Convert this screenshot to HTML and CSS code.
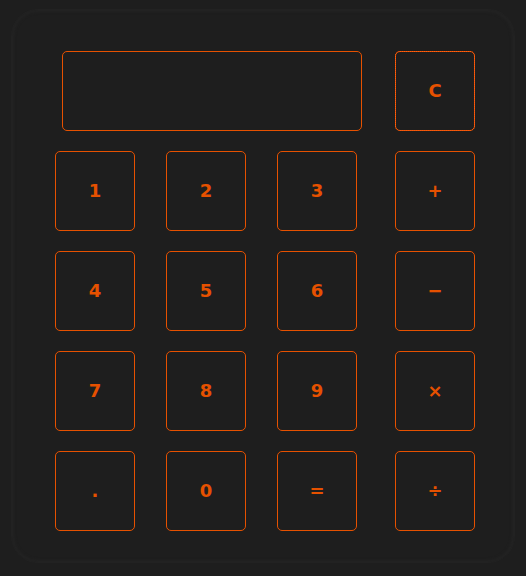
FILE: index.html
```html
<!DOCTYPE html>
<html>
<head>
<meta charset="utf-8">
<link rel="stylesheet" href="styles.css">
</head>
<body>
<div class="calc">
  <div class="top">
    <div class="display"></div>
    <button class="key key-clear">C</button>
  </div>
  <div class="keys">
    <button class="key">1</button>
    <button class="key">2</button>
    <button class="key">3</button>
    <button class="key op">+</button>
    <button class="key">4</button>
    <button class="key">5</button>
    <button class="key">6</button>
    <button class="key op">&minus;</button>
    <button class="key">7</button>
    <button class="key">8</button>
    <button class="key">9</button>
    <button class="key op">&times;</button>
    <button class="key">.</button>
    <button class="key">0</button>
    <button class="key">=</button>
    <button class="key op">&divide;</button>
  </div>
</div>
</body>
</html>
```
FILE: styles.css
```css
html, body {
  margin: 0;
  padding: 0;
  background: #1e1e1e;
}
body {
  width: 526px;
  height: 576px;
  overflow: hidden;
  font-family: "DejaVu Sans", sans-serif;
}
.calc {
  box-sizing: border-box;
  margin: 10px 0 0 12px;
  width: 502px;
  height: 552px;
  border-radius: 26px;
  background: #1e1e1e;
  box-shadow: 0 0 0 1px #222222, inset 0 0 3px 2px #232323;
  padding: 41px 0 0 0;
}
.top {
  display: flex;
  padding-left: 50px;
  gap: 33px;
  margin-bottom: 20px;
}
.display {
  box-sizing: border-box;
  width: 300px;
  height: 80px;
  border: 1px solid #e65100;
  border-radius: 5px;
}
.key {
  box-sizing: border-box;
  width: 80px;
  height: 80px;
  border: 1px solid #e65100;
  border-radius: 5px;
  background: transparent;
  color: #e65100;
  font-family: "DejaVu Sans", sans-serif;
  font-weight: bold;
  font-size: 18px;
  padding: 0 0 2px 0;
  margin: 0;
  display: flex;
  align-items: center;
  justify-content: center;
}
.key-clear {
  outline: 1px dotted #ff5e14;
  outline-offset: -1px;
}
.keys {
  display: grid;
  grid-template-columns: 80px 80px 80px 87px;
  column-gap: 31px;
  row-gap: 20px;
  padding-left: 43px;
}
.op {
  justify-self: end;
}
```
